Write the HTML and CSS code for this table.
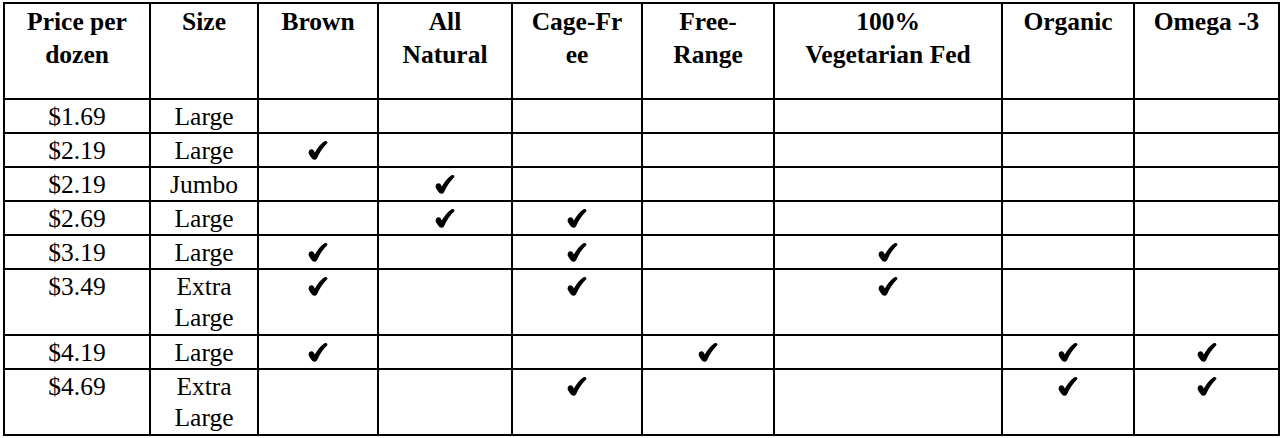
FILE: index.html
```html
<!DOCTYPE html>
<html>
<head>
<meta charset="utf-8">
<link rel="stylesheet" href="styles.css">
</head>
<body>
<svg width="0" height="0" class="defs" aria-hidden="true">
  <defs>
    <symbol id="chk" viewBox="0 0 18 18">
      <path d="M15.5 0 Q17.8 -0.3 18 1.8 C13.5 6 10.5 11 8 16.6 Q6.5 18.6 4 17.4 C2.6 15.5 1 13.6 0.2 11.8 Q-0.4 8.4 2.4 7.9 Q4.6 7.6 5.4 9.8 L5.9 11 C8.5 6.5 11.5 2.5 15.5 0 Z"/>
    </symbol>
  </defs>
</svg>
<table class="eggs">
  <colgroup>
    <col class="c1"><col class="c2"><col class="c3"><col class="c4"><col class="c5"><col class="c6"><col class="c7"><col class="c8"><col class="c9">
  </colgroup>
  <thead>
    <tr class="head">
      <th>Price per<br>dozen</th>
      <th>Size</th>
      <th>Brown</th>
      <th>All<br>Natural</th>
      <th>Cage-Fr<br>ee</th>
      <th>Free-<br>Range</th>
      <th>100%<br>Vegetarian Fed</th>
      <th>Organic</th>
      <th>Omega -3</th>
    </tr>
  </thead>
  <tbody>
    <tr><td>$1.69</td><td>Large</td><td></td><td></td><td></td><td></td><td></td><td></td><td></td></tr>
    <tr><td>$2.19</td><td>Large</td><td><svg class="ck"><use href="#chk"/></svg></td><td></td><td></td><td></td><td></td><td></td><td></td></tr>
    <tr><td>$2.19</td><td>Jumbo</td><td></td><td><svg class="ck"><use href="#chk"/></svg></td><td></td><td></td><td></td><td></td><td></td></tr>
    <tr><td>$2.69</td><td>Large</td><td></td><td><svg class="ck"><use href="#chk"/></svg></td><td><svg class="ck"><use href="#chk"/></svg></td><td></td><td></td><td></td><td></td></tr>
    <tr><td>$3.19</td><td>Large</td><td><svg class="ck"><use href="#chk"/></svg></td><td></td><td><svg class="ck"><use href="#chk"/></svg></td><td></td><td><svg class="ck"><use href="#chk"/></svg></td><td></td><td></td></tr>
    <tr class="two"><td>$3.49</td><td>Extra<br>Large</td><td><svg class="ck"><use href="#chk"/></svg></td><td></td><td><svg class="ck"><use href="#chk"/></svg></td><td></td><td><svg class="ck"><use href="#chk"/></svg></td><td></td><td></td></tr>
    <tr><td>$4.19</td><td>Large</td><td><svg class="ck"><use href="#chk"/></svg></td><td></td><td></td><td><svg class="ck"><use href="#chk"/></svg></td><td></td><td><svg class="ck"><use href="#chk"/></svg></td><td><svg class="ck"><use href="#chk"/></svg></td></tr>
    <tr class="two"><td>$4.69</td><td>Extra<br>Large</td><td></td><td></td><td><svg class="ck"><use href="#chk"/></svg></td><td></td><td></td><td><svg class="ck"><use href="#chk"/></svg></td><td><svg class="ck"><use href="#chk"/></svg></td></tr>
  </tbody>
</table>
</body>
</html>
```
FILE: styles.css
```css
html, body {
  margin: 0;
  padding: 0;
  background: #ffffff;
}

.defs {
  position: absolute;
  width: 0;
  height: 0;
  overflow: hidden;
}

.eggs {
  margin: 2px 0 0 3px;
  border-collapse: collapse;
  table-layout: fixed;
  width: 1277px;
  font-family: "Liberation Serif", "Times New Roman", Times, serif;
  font-size: 25.5px;
  color: #000000;
}

.c1 { width: 146px; }
.c2 { width: 108px; }
.c3 { width: 120px; }
.c4 { width: 134px; }
.c5 { width: 130px; }
.c6 { width: 132px; }
.c7 { width: 228px; }
.c8 { width: 132px; }
.c9 { width: 145px; }

.eggs th,
.eggs td {
  border: 2px solid #000000;
  text-align: center;
  vertical-align: top;
  white-space: nowrap;
  padding: 1px 0 0;
}

.eggs th {
  font-weight: bold;
  line-height: 33px;
  height: 93px;
}

.eggs td {
  line-height: 31px;
}

.eggs .two td {
  padding-bottom: 1px;
}

.ck {
  width: 20px;
  height: 19px;
  fill: #000000;
  vertical-align: -1px;
}
```
